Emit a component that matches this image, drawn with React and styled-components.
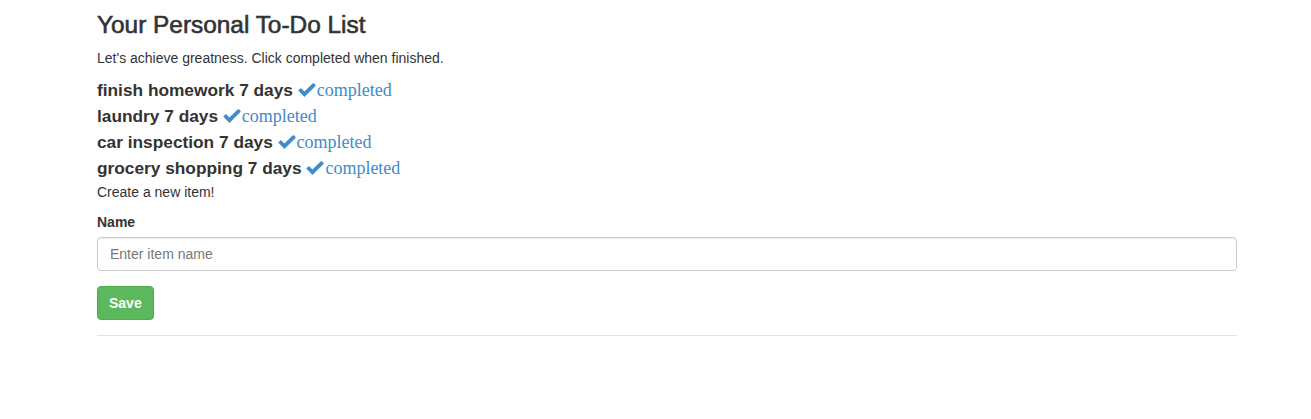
import styled, { createGlobalStyle } from "styled-components";

const GlobalStyle = createGlobalStyle`
  * {
    box-sizing: border-box;
  }
  body {
    margin: 0;
    background: #fff;
    color: #333;
    font-family: "Liberation Sans", Arial, sans-serif;
    font-size: 14px;
    line-height: 20px;
  }
`;

const Container = styled.div`
  width: 1140px;
  margin-left: 97px;
`;

const Title = styled.h3`
  margin: 12px 0 10px;
  font-size: 24.4px;
  font-weight: 400;
  line-height: 26.4px;
  color: #333;
  -webkit-text-stroke: 0.6px #333;
`;

const Lead = styled.p`
  margin: 0 0 9px;
`;

const List = styled.ul`
  list-style: none;
  margin: 0;
  padding: 0;
`;

const Item = styled.li`
  font-size: 17.3px;
  font-weight: 700;
  line-height: 26px;
  color: #333;
`;

const Done = styled.a`
  color: #428bca;
  font-family: "Liberation Serif", "Times New Roman", serif;
  font-size: 18px;
  font-weight: 400;
  text-decoration: none;
  cursor: pointer;

  svg {
    width: 18px;
    height: 14px;
    margin-right: 1px;
    vertical-align: -1px;
  }
`;

const Note = styled.p`
  margin: 1px 0 10px;
`;

const FormGroup = styled.div`
  margin-bottom: 15px;
`;

const Label = styled.label`
  display: inline-block;
  margin-bottom: 5px;
  font-weight: 700;
`;

const Input = styled.input`
  display: block;
  width: 100%;
  height: 34px;
  padding: 6px 12px;
  font-family: inherit;
  font-size: 14px;
  color: #555;
  border: 1px solid #ccc;
  border-radius: 4px;
  box-shadow: inset 0 1px 1px rgba(0, 0, 0, 0.075);
  outline: none;

  &::placeholder {
    color: #777;
  }
`;

const Button = styled.button`
  height: 34px;
  padding: 6px 11px;
  font-family: inherit;
  font-size: 14px;
  font-weight: 700;
  color: #fff;
  background: #5cb85c;
  border: 1px solid #4cae4c;
  border-radius: 4px;
  cursor: pointer;
`;

const Rule = styled.hr`
  margin: 15px 0 0;
  border: 0;
  border-top: 1px solid #e2e2e2;
`;

const Check = () => (
  <svg viewBox="0 0 18 14" aria-hidden="true">
    <path
      d="M0.3 7.6 L2.9 5 L6.4 8.4 L14.6 0.4 Q15.4 -0.2 16.2 0.6 L17.4 1.8 Q17.9 2.5 17.3 3.2 L6.4 13.9 Z"
      fill="currentColor"
    />
  </svg>
);

const todos = [
  { id: 1, name: "finish homework", due: "7 days" },
  { id: 2, name: "laundry", due: "7 days" },
  { id: 3, name: "car inspection", due: "7 days" },
  { id: 4, name: "grocery shopping", due: "7 days" },
];

export default function App() {
  return (
    <>
      <GlobalStyle />
      <Container>
        <Title>Your Personal To-Do List</Title>
        <Lead>Let's achieve greatness. Click completed when finished.</Lead>
        <List>
          {todos.map((todo) => (
            <Item key={todo.id}>
              {todo.name} {todo.due}{" "}
              <Done>
                <Check />
                completed
              </Done>
            </Item>
          ))}
        </List>
        <Note>Create a new item!</Note>
        <form onSubmit={(e) => e.preventDefault()}>
          <FormGroup>
            <Label htmlFor="name">Name</Label>
            <Input id="name" placeholder="Enter item name" />
          </FormGroup>
          <Button type="submit">Save</Button>
        </form>
        <Rule />
      </Container>
    </>
  );
}
